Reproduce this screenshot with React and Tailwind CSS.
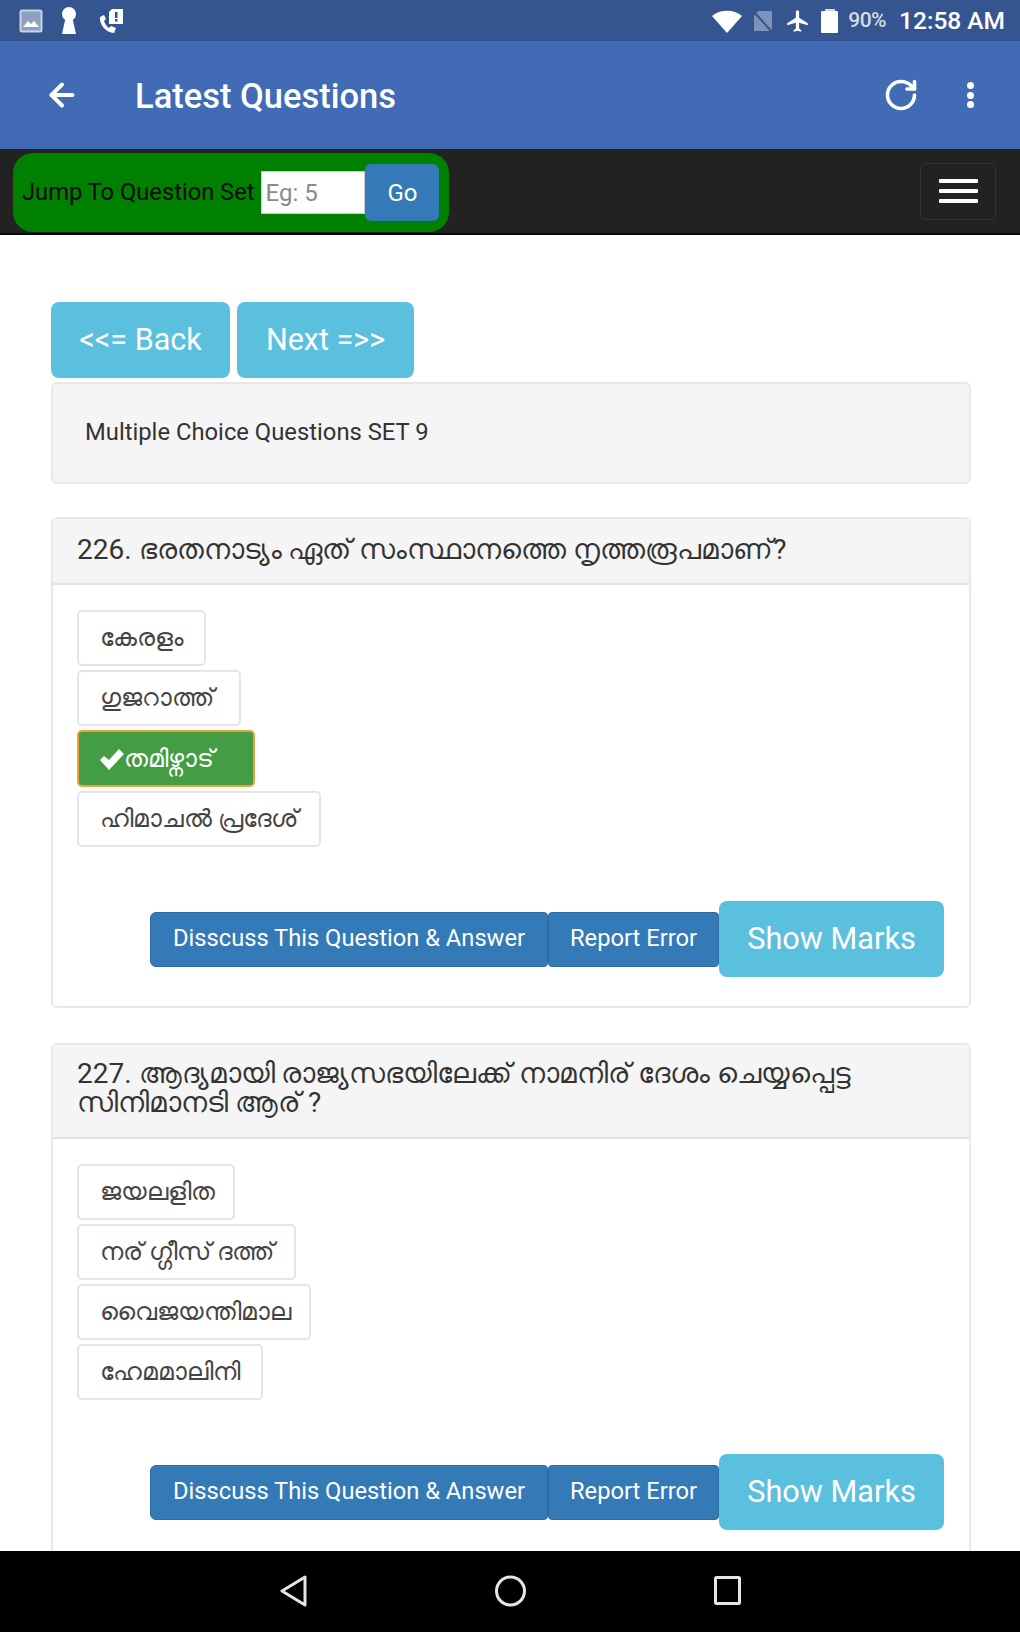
import React from "react";
import { ArrowLeft, RotateCw } from "lucide-react";

const StatusBar = () => (
  <div className="h-[41px] shrink-0 bg-[#355590] flex items-center justify-between pl-[19px] pr-[15px]">
    <div className="flex items-center">
      {/* picture */}
      <svg width="24" height="24" viewBox="0 0 24 24" className="mr-[16px]">
        <rect x="1.5" y="1.5" width="21" height="21" rx="1.5" fill="#8ea0c2" stroke="#c9d2e3" strokeWidth="2" />
        <path d="M4 18 L9 12 L12 15 L15 12 L20 18 Z" fill="#fff" />
      </svg>
      {/* keyhole */}
      <svg width="20" height="30" viewBox="0 0 20 30" className="mr-[18px]">
        <circle cx="10" cy="8" r="7" fill="#fff" />
        <path d="M7 10 L3 28 H17 L13 10 Z" fill="#fff" />
      </svg>
      {/* call with alert */}
      <svg width="28" height="30" viewBox="0 0 28 30">
        <path d="M3 11 C2 18 9 27 17 27 L19 22 L14 20 L12 22 C10 21 8 18 7 15 L9 13 L7 9 Z" fill="#fff" />
        <path d="M15 3 H26 V18 H12 V6 Z" fill="#fff" />
        <rect x="18" y="6" width="2.5" height="6" fill="#355590" />
        <rect x="18" y="13" width="2.5" height="2.5" fill="#355590" />
      </svg>
    </div>
    <div className="flex items-center">
      {/* wifi */}
      <svg width="30" height="24" viewBox="0 0 30 24" className="mr-[10px]">
        <path d="M0 7 C8 0 22 0 30 7 L15 24 Z" fill="#fff" />
      </svg>
      {/* no sim */}
      <svg width="22" height="24" viewBox="0 0 22 24" className="mr-[11px]">
        <path d="M6 2 H20 V22 H2 V7 Z" fill="#7f93ba" />
        <path d="M1 2 L21 24" stroke="#355590" strokeWidth="2" />
      </svg>
      {/* airplane */}
      <svg width="26" height="26" viewBox="0 0 24 24" className="mr-[10px]">
        <path d="M21 16v-2l-8-5V3.500a1.500 1.500 0 0 0-3 0V9l-8 5v2l8-2.500V19l-2 1.500V22l3.500-1 3.500 1v-1.500L13 19v-5.500z" fill="#fff" />
      </svg>
      {/* battery */}
      <div className="flex flex-col items-center mr-[10px]">
        <div className="w-[10px] h-[2px] bg-[#cfd6e4]" />
        <div className="w-[17px] h-[22px] bg-white rounded-[1px]" />
      </div>
      <span className="text-[21px] font-medium text-[#d5dbe7] mr-[13px] tracking-[-0.5px] mt-[1px]">90%</span>
      <span className="text-[24.5px] font-medium text-white mt-[1px]">12:58 AM</span>
    </div>
  </div>
);

const AppBar = () => (
  <div className="h-[108px] shrink-0 bg-[#416bb5] flex items-center pl-[44px] pr-[46px]">
    <ArrowLeft size={36} strokeWidth={2.600} className="text-white" />
    <div className="ml-[55px] flex-1 pt-[3px] text-[34.500px] font-medium text-white">Latest Questions</div>
    <RotateCw size={36} strokeWidth={2.400} className="text-white mr-[48px]" />
    <div className="flex flex-col gap-[2.500px]">
      <span className="w-[7px] h-[7px] rounded-full bg-white" />
      <span className="w-[7px] h-[7px] rounded-full bg-white" />
      <span className="w-[7px] h-[7px] rounded-full bg-white" />
    </div>
  </div>
);

const NavBar = () => (
  <div className="h-[86px] shrink-0 bg-[#222222] border-b-2 border-b-[#080808] flex items-center justify-between pl-[13px] pr-[24px]">
    <div className="w-[436px] h-[79px] mt-[3px] bg-[#008000] rounded-[20px] flex items-center pl-[9px]">
      <span className="text-[23.700px] text-[#0a0a0a] whitespace-nowrap mr-[7px]">Jump To Question Set</span>
      <input
        placeholder="Eg: 5"
        className="w-[104px] h-[43px] bg-white border border-[#cccccc] px-[3px] text-[24px] outline-none placeholder:text-[#8a8a8a]"
      />
      <button className="w-[74px] h-[57px] bg-[#337ab7] rounded-[6px] text-white text-[24px]">Go</button>
    </div>
    <div className="w-[76px] h-[57px] border border-[#333333] rounded-[6px] flex flex-col items-center justify-center gap-[6px]">
      <span className="w-[39px] h-[4px] rounded-[1px] bg-white" />
      <span className="w-[39px] h-[4px] rounded-[1px] bg-white" />
      <span className="w-[39px] h-[4px] rounded-[1px] bg-white" />
    </div>
  </div>
);

const OptionButton = ({ label, correct, widthClass }) =>
  correct ? (
    <div className={`h-[57px] flex items-center pl-[21px] rounded-[5px] border-2 border-[#eea236] bg-[#449d44] text-white text-[25px] ${widthClass}`}>
      <svg width="24" height="22" viewBox="0 0 24 22" className="shrink-0">
        <path d="M0 12 L4 8 L9 12 L19 1 L24 6 L9 22 Z" fill="#fff" />
      </svg>
      <span>{label}</span>
    </div>
  ) : (
    <div className={`h-[56px] flex items-center pl-[21px] rounded-[5px] border-2 border-[#e5e5e5] bg-white text-[#444444] text-[25px] whitespace-nowrap ${widthClass}`}>
      {label}
    </div>
  );

const QuestionPanel = ({ title, headClass, options }) => (
  <div className="border-2 border-[#e8e8e8] rounded-[6px] bg-white">
    <div className={`bg-[#f5f5f5] border-b-2 border-[#e3e3e3] px-[24px] text-[28px] text-[#333333] leading-[29px] ${headClass}`}>
      {title}
    </div>
    <div className="px-[24px] pt-[25px] pb-[29px]">
      <div className="flex flex-col gap-[4px]">
        {options.map((o) => (
          <OptionButton key={o.label} label={o.label} correct={o.correct} widthClass={o.widthClass} />
        ))}
      </div>
      <div className="flex justify-end items-center mt-[54px] mr-[1px]">
        <button className="h-[55px] w-[398px] bg-[#337ab7] border border-[#2e6da4] rounded-l-[6px] rounded-r-[4px] text-white text-[23.700px]">
          Disscuss This Question &amp; Answer
        </button>
        <button className="h-[55px] w-[171px] bg-[#337ab7] border border-[#2e6da4] rounded-[4px] text-white text-[23.700px]">
          Report Error
        </button>
        <button className="h-[76px] w-[225px] bg-[#5bc0de] rounded-[8px] text-white text-[30.700px]">Show Marks</button>
      </div>
    </div>
  </div>
);

const SystemNav = () => (
  <div className="h-[81px] shrink-0 bg-black flex items-center justify-center gap-[188px] pb-[2px]">
    <svg width="27" height="32" viewBox="0 0 27 32">
      <path d="M25 2 L2 16 L25 30 Z" fill="none" stroke="#e6e6e6" strokeWidth="3" strokeLinejoin="round" />
    </svg>
    <svg width="31" height="32" viewBox="0 0 31 32">
      <circle cx="15.500" cy="16" r="14" fill="none" stroke="#e6e6e6" strokeWidth="3" />
    </svg>
    <svg width="27" height="29" viewBox="0 0 27 29">
      <rect x="1.500" y="1.500" width="24" height="26" rx="1" fill="none" stroke="#e6e6e6" strokeWidth="3" />
    </svg>
  </div>
);

export default function App() {
  return (
    <div className="w-[1020px] h-[1632px] flex flex-col overflow-hidden bg-white font-['Roboto','Noto_Sans',sans-serif]">
      <StatusBar />
      <AppBar />
      <NavBar />
      <div className="flex-1 overflow-hidden pl-[51px] pr-[49px] pt-[67px]">
        <div className="flex gap-[7px]">
          <button className="w-[179px] h-[76px] bg-[#5bc0de] rounded-[8px] text-white text-[30.500px]">&lt;&lt;= Back</button>
          <button className="w-[177px] h-[76px] bg-[#5bc0de] rounded-[8px] text-white text-[30.500px]">Next =&gt;&gt;</button>
        </div>
        <div className="mt-[4px] h-[102px] bg-[#f5f5f5] border-2 border-[#e8e8e8] rounded-[6px] flex items-center pl-[32px] text-[23.800px] text-[#333333]">
          Multiple Choice Questions SET 9
        </div>
        <div className="mt-[33px] flex flex-col gap-[35px]">
          <QuestionPanel
            title="226. ഭരതനാട്യം ഏത് സംസ്ഥാനത്തെ നൃത്തരൂപമാണ്?"
            headClass="h-[66px] flex items-center pb-[3px]"
            options={[
              { label: "കേരളം", widthClass: "w-[129px]" },
              { label: "ഗുജറാത്ത്", widthClass: "w-[164px]" },
              { label: "തമിഴ്നാട്", correct: true, widthClass: "w-[178px]" },
              { label: "ഹിമാചൽ പ്രദേശ്", widthClass: "w-[244px]" },
            ]}
          />
          <QuestionPanel
            title="227. ആദ്യമായി രാജ്യസഭയിലേക്ക് നാമനിര് ദേശം ചെയ്യപ്പെട്ട സിനിമാനടി ആര് ?"
            headClass="h-[94px] pt-[14px]"
            options={[
              { label: "ജയലളിത", widthClass: "w-[158px]" },
              { label: "നര് ഗ്ഗീസ് ദത്ത്", widthClass: "w-[219px]" },
              { label: "വൈജയന്തിമാല", widthClass: "w-[234px]" },
              { label: "ഹേമമാലിനി", widthClass: "w-[186px]" },
            ]}
          />
        </div>
      </div>
      <SystemNav />
    </div>
  );
}
